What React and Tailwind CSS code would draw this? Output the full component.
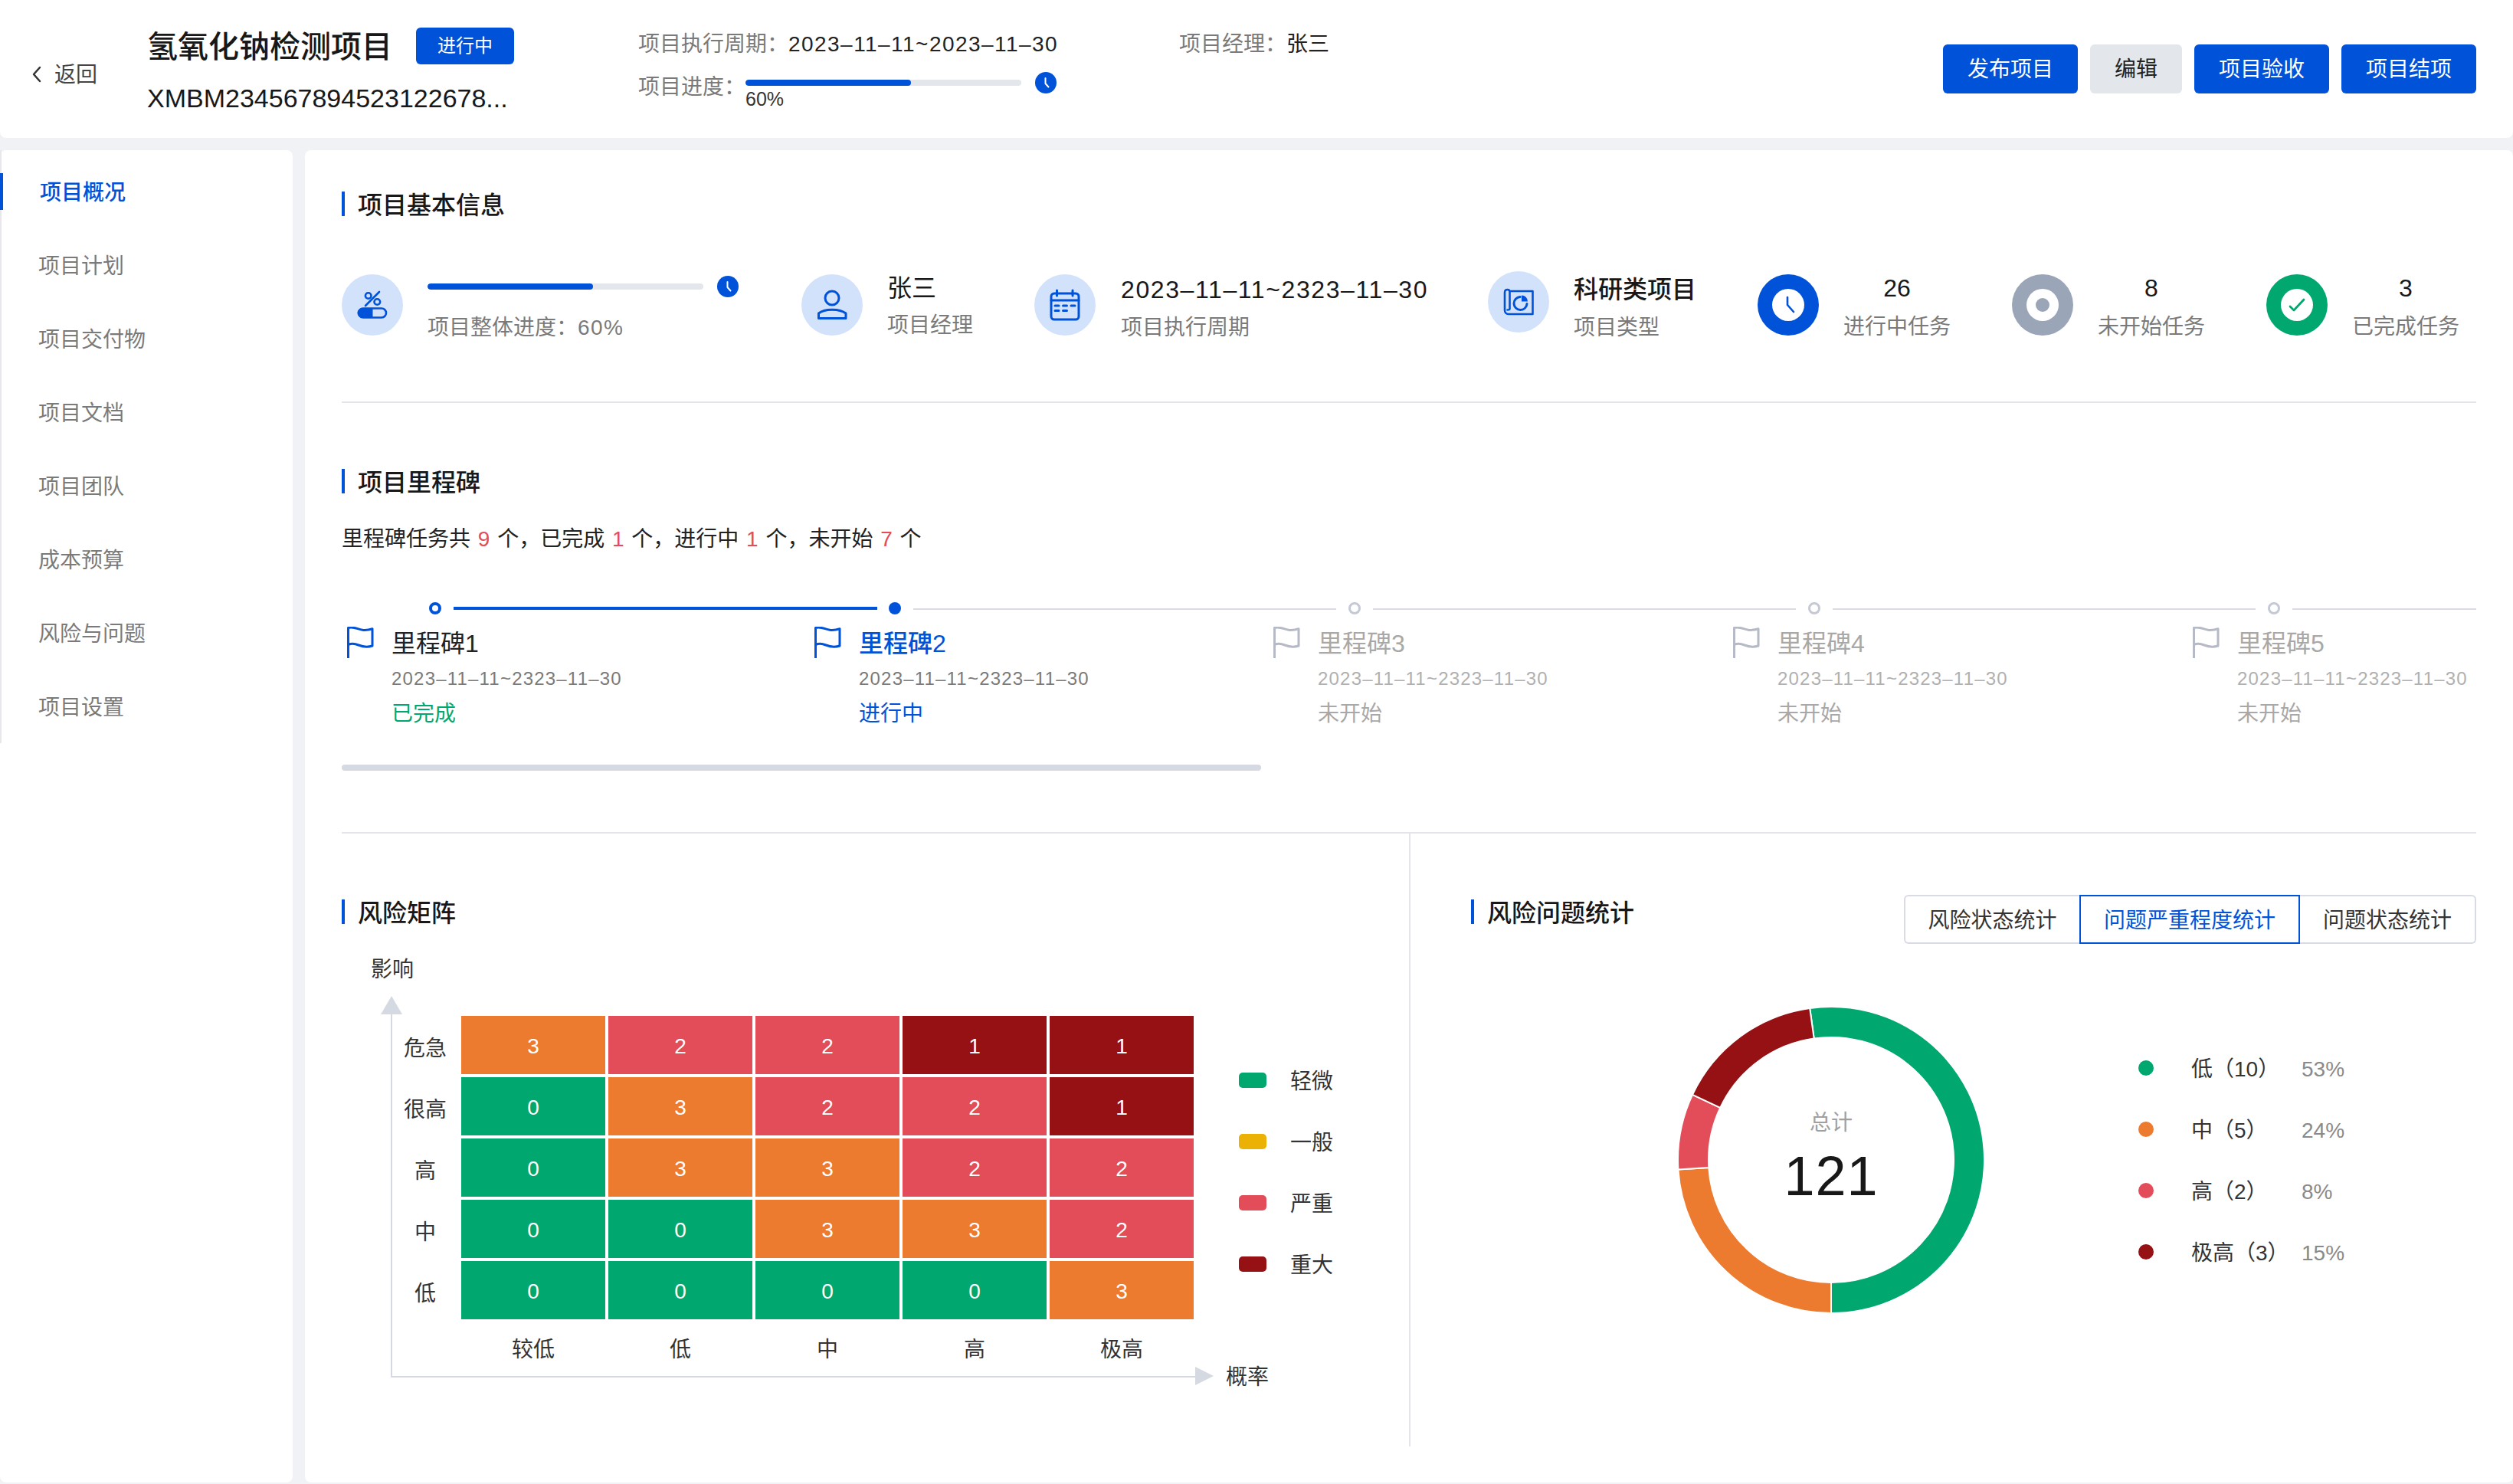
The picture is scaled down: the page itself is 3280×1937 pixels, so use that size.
import React from "react";

const BLUE = "#0052d9";
const G = "bg-[#00a870]", O = "bg-[#ed7b2f]", R = "bg-[#e34d59]", D = "bg-[#951114]";

function SectionTitle({ children, className = "" }) {
  return (
    <div className={"flex items-start h-[32px] " + className}>
      <div className="w-[4px] h-[32px] bg-[#0052d9] mr-[17px]" />
      <div className="text-[32px] leading-[32px] pt-[2px] font-medium text-[#181818]">{children}</div>
    </div>
  );
}

function SmallClock() {
  return (
    <div className="w-[28px] h-[28px] rounded-full bg-[#0052d9] shrink-0 flex items-center justify-center">
      <svg width="28" height="28" viewBox="0 0 28 28" fill="none">
        <path d="M13.5 8v7l4 4.5" stroke="#fff" strokeWidth="2" strokeLinecap="round" strokeLinejoin="round" />
      </svg>
    </div>
  );
}

function Bar() {
  return (
    <div className="w-[360px] h-[8px] rounded-full bg-[#e3e6eb] overflow-hidden">
      <div className="h-full bg-[#0052d9] rounded-full" style={{ width: "60%" }} />
    </div>
  );
}

function Circle({ children, className = "" }) {
  return (
    <div className={"w-[80px] h-[80px] rounded-full bg-[#d3e2fb] shrink-0 " + className}>
      <svg width="80" height="80" viewBox="0 0 80 80" fill="none" stroke={BLUE} strokeWidth="3" strokeLinecap="round" strokeLinejoin="round">
        {children}
      </svg>
    </div>
  );
}

function Status({ bg, children, dot }) {
  return (
    <div className={"w-[80px] h-[80px] rounded-full shrink-0 mt-[4px] flex items-center justify-center " + bg}>
      <div className="w-[42px] h-[42px] rounded-full bg-white flex items-center justify-center">
        {dot ? <div className="w-[18px] h-[18px] rounded-full bg-[#9aa5b8]" /> : children}
      </div>
    </div>
  );
}

function Info({ name, sub, className = "", nameCls = "mt-[4px]", subCls = "mt-[10px]" }) {
  return (
    <div className={className}>
      <div className={"text-[32px] leading-[40px] tracking-[1.6px] text-[#181818] whitespace-nowrap " + nameCls}>{name}</div>
      <div className={"text-[28px] leading-[40px] text-[#7a7a7a] whitespace-nowrap " + subCls}>{sub}</div>
    </div>
  );
}

function Stat({ w, bg, dot, icon, num, label }) {
  return (
    <div className={"flex shrink-0 " + w}>
      <Status bg={bg} dot={dot}>{icon}</Status>
      <div className="ml-[32px] w-[140px] text-center">
        <div className="text-[32px] leading-[40px] mt-[2px] text-[#181818]">{num}</div>
        <div className="text-[28px] leading-[40px] mt-[11px] text-[#7a7a7a] whitespace-nowrap">{label}</div>
      </div>
    </div>
  );
}

function Flag({ color }) {
  return (
    <svg width="36" height="42" viewBox="0 0 36 42" fill="none" className="mt-[2px] shrink-0" stroke={color} strokeWidth="3" strokeLinejoin="round">
      <path d="M1.5 41V1.5C9 -0.5 14 3.5 20 4.2C25 4.8 29 4 33 2.8V25C27 27 21 26.5 15 24C9.5 21.8 5.5 21.8 1.5 23.5" />
    </svg>
  );
}

function Milestone({ w, title, status, titleCls, statusCls, flag, dateCls }) {
  return (
    <div className={"flex shrink-0 pl-[7px] " + w}>
      <Flag color={flag} />
      <div className="ml-[22px] mt-[2px]">
        <div className={"text-[32px] leading-[44px] whitespace-nowrap " + titleCls}>{title}</div>
        <div className={"text-[24px] leading-[36px] mt-[6px] tracking-[1.2px] whitespace-nowrap " + dateCls}>2023–11–11~2323–11–30</div>
        <div className={"text-[28px] leading-[40px] mt-[8px] whitespace-nowrap " + statusCls}>{status}</div>
      </div>
    </div>
  );
}

const RING_BLUE = "w-[16px] h-[16px] rounded-full border-[4px] border-[#0052d9] bg-white shrink-0";
const RING_GRAY = "w-[16px] h-[16px] rounded-full border-[3px] border-[#c4c9d4] bg-white shrink-0";
const LINE_GRAY = "h-[2px] bg-[#d8dbe4] mx-[16px]";

const matrix = [
  [[O, 3], [R, 2], [R, 2], [D, 1], [D, 1]],
  [[G, 0], [O, 3], [R, 2], [R, 2], [D, 1]],
  [[G, 0], [O, 3], [O, 3], [R, 2], [R, 2]],
  [[G, 0], [G, 0], [O, 3], [O, 3], [R, 2]],
  [[G, 0], [G, 0], [G, 0], [G, 0], [O, 3]],
];

function polar(r, deg) {
  const a = ((deg - 90) * Math.PI) / 180;
  return [200 + r * Math.cos(a), 200 + r * Math.sin(a)];
}
function arc(start, end) {
  const [x1, y1] = polar(200, start);
  const [x2, y2] = polar(200, end);
  const [x3, y3] = polar(160, end);
  const [x4, y4] = polar(160, start);
  const large = end - start > 180 ? 1 : 0;
  return `M${x1} ${y1}A200 200 0 ${large} 1 ${x2} ${y2}L${x3} ${y3}A160 160 0 ${large} 0 ${x4} ${y4}Z`;
}

const segs = [
  ["#00a870", -8, 180],
  ["#ed7b2f", 180, 266.4],
  ["#e34d59", 266.4, 295.2],
  ["#951114", 295.2, 352],
];

const legendRows = [
  ["bg-[#00a870]", "低（10）", "53%"],
  ["bg-[#ed7b2f]", "中（5）", "24%"],
  ["bg-[#e34d59]", "高（2）", "8%"],
  ["bg-[#951114]", "极高（3）", "15%"],
];

const TAB_TEXT = "leading-[36px] pt-[4px]";

export default function App() {
  return (
    <div className="w-[3280px] h-[1937px] bg-[#f0f2f5] flex flex-col overflow-hidden text-[#181818] [font-family:'Liberation_Sans','Noto_Sans_CJK_SC',sans-serif]">
      {/* header */}
      <header className="h-[180px] shrink-0 bg-white rounded-b-[8px] flex items-start">
        <div className="w-[192px] shrink-0 pl-[41px] pt-[76px] flex items-center">
          <svg width="14" height="40" viewBox="0 0 14 40" fill="none">
            <path d="M11 11L3 20L11 29" stroke="#333" strokeWidth="2.5" strokeLinecap="round" strokeLinejoin="round" />
          </svg>
          <span className="ml-[16px] text-[28px] leading-[40px] pt-[2px] text-[#444]">返回</span>
        </div>
        <div className="w-[641px] shrink-0 pt-[34px]">
          <div className="flex items-center h-[52px]">
            <div className="text-[40px] leading-[52px] pt-[2px] font-medium text-[#181818]">氢氧化钠检测项目</div>
            <div className="ml-[31px] w-[128px] h-[48px] rounded-[6px] bg-[#0052d9] text-white text-[24px] flex items-center justify-center">进行中</div>
          </div>
          <div className="mt-[19px] text-[34px] leading-[46px] text-[#181818] whitespace-nowrap">XMBM234567894523122678...</div>
        </div>
        <div className="w-[706px] shrink-0 pt-[38px]">
          <div className="text-[28px] leading-[40px] whitespace-nowrap">
            <span className="text-[#7a7a7a]">项目执行周期：</span>
            <span className="tracking-[1.45px] text-[#222]">2023–11–11~2023–11–30</span>
          </div>
          <div className="flex mt-[16px]">
            <div className="w-[140px] text-[28px] leading-[40px] text-[#7a7a7a] shrink-0">项目进度：</div>
            <div>
              <div className="flex items-center gap-[18px] h-[28px]">
                <Bar />
                <SmallClock />
              </div>
              <div className="text-[25px] leading-[32px] -mt-[9px] text-[#333]">60%</div>
            </div>
          </div>
        </div>
        <div className="pt-[38px] text-[28px] leading-[40px] whitespace-nowrap">
          <span className="text-[#7a7a7a]">项目经理：</span>
          <span className="text-[#222]">张三</span>
        </div>
        <div className="ml-auto mr-[48px] mt-[58px] flex gap-[16px]">
          {["发布项目", "编辑", "项目验收", "项目结项"].map((t) => (
            <div
              key={t}
              className={
                "h-[64px] px-[32px] pt-[2px] rounded-[6px] text-[28px] flex items-center justify-center " +
                (t === "编辑" ? "bg-[#e3e6eb] text-[#222]" : "bg-[#0052d9] text-white")
              }
            >
              {t}
            </div>
          ))}
        </div>
      </header>

      <div className="mt-[16px] flex gap-[16px] h-[1739px]">
        {/* sidebar */}
        <aside className="w-[382px] shrink-0 bg-white rounded-[8px]">
          <nav className="border-l-[2px] border-[#e7e7ec] pt-[30px] pb-[24px] flex flex-col gap-[48px] text-[28px]">
            {["项目概况", "项目计划", "项目交付物", "项目文档", "项目团队", "成本预算", "风险与问题", "项目设置"].map((t, i) => (
              <div
                key={t}
                className={
                  "h-[48px] leading-[44px] pt-[4px] " +
                  (i === 0
                    ? "-ml-[2px] border-l-[4px] border-[#0052d9] pl-[48px] text-[#0052d9] font-medium"
                    : "pl-[48px] text-[#7a7a7a]")
                }
              >
                {t}
              </div>
            ))}
          </nav>
        </aside>

        {/* main */}
        <main className="w-[2882px] shrink-0 bg-white rounded-[8px] px-[48px] pt-[54px]">
          <SectionTitle>项目基本信息</SectionTitle>

          <div className="flex h-[84px] mt-[72px] items-start">
            <div className="flex w-[600px] shrink-0 mt-[4px]">
              <Circle>
                <circle cx="34.7" cy="28" r="3.8" strokeWidth="2.6" />
                <circle cx="46.3" cy="36" r="3.8" strokeWidth="2.6" />
                <path d="M49 23L31 41" strokeWidth="2.6" />
                <rect x="22" y="44.5" width="36" height="12" rx="6" strokeWidth="2.6" />
                <path d="M27 44.5H40V56.5H27A6 6 0 0 1 27 44.5Z" fill={BLUE} strokeWidth="1" />
              </Circle>
              <div className="ml-[32px]">
                <div className="flex items-center gap-[18px] h-[28px] mt-[2px]">
                  <Bar />
                  <SmallClock />
                </div>
                <div className="text-[28px] leading-[40px] mt-[20px] text-[#7a7a7a]">项目整体进度：<span className="tracking-[1.4px]">60%</span></div>
              </div>
            </div>

            <div className="flex w-[304px] shrink-0 mt-[4px]">
              <Circle>
                <circle cx="40" cy="31" r="9" />
                <path d="M22.5 57.5V51C30 44.5 50 44.5 58 51V57.5Z" />
              </Circle>
              <Info className="ml-[32px]" name="张三" sub="项目经理" nameCls="-mt-[2px] tracking-normal" subCls="mt-[9px]" />
            </div>

            <div className="flex w-[592px] shrink-0 mt-[4px]">
              <Circle>
                <rect x="22" y="25" width="36" height="34" rx="4" />
                <path d="M29.5 21V28M50 21V28M22 34H58" />
                <path d="M27 41H32M37.5 41H42.5M48 41H53M27 47.5H32M37.5 47.5H42.5" strokeWidth="3" />
              </Circle>
              <Info className="ml-[33px]" name="2023–11–11~2323–11–30" sub="项目执行周期" nameCls="mt-0" />
            </div>

            <div className="flex w-[352px] shrink-0">
              <Circle>
                <path d="M28.5 26H58.5V56H27C23.5 56 22 53.5 22 51V28C22 25 24 24 25.5 24C27.5 24 28.5 25 28.5 27V49C28.5 50.5 27 50.5 25.5 50.5" strokeWidth="2.6" />
                <path d="M42 33.5A8.5 8.5 0 1 0 51 42.5" strokeWidth="3" />
                <path d="M44 31.5A8 8 0 0 1 52 39.5H44Z" fill={BLUE} stroke="none" />
              </Circle>
              <Info className="ml-[32px]" name={<span className="font-medium tracking-normal">科研类项目</span>} sub="项目类型" />
            </div>

            <Stat
              w="w-[332px]"
              bg="bg-[#0052d9]"
              num="26"
              label="进行中任务"
              icon={
                <svg width="42" height="42" viewBox="0 0 42 42" fill="none">
                  <path d="M20 11V21L28 30" stroke={BLUE} strokeWidth="2.6" strokeLinecap="round" strokeLinejoin="round" />
                </svg>
              }
            />
            <Stat w="w-[332px]" bg="bg-[#9aa5b8]" dot num="8" label="未开始任务" />
            <Stat
              w="w-[274px]"
              bg="bg-[#00a870]"
              num="3"
              label="已完成任务"
              icon={
                <svg width="42" height="42" viewBox="0 0 42 42" fill="none">
                  <path d="M12 23L17 28L30 14" stroke="#00a870" strokeWidth="2.8" strokeLinecap="round" strokeLinejoin="round" />
                </svg>
              }
            />
          </div>

          <div className="h-[2px] bg-[#e3e5ea] mt-[86px]" />

          <SectionTitle className="mt-[86px]">项目里程碑</SectionTitle>

          <div className="mt-[40px] text-[28px] leading-[40px] text-[#222] whitespace-pre">
            里程碑任务共 <span className="mx-[2px] text-[#e34d59]">9</span> 个，已完成 <span className="mx-[2px] text-[#e34d59]">1</span> 个，进行中 <span className="mx-[2px] text-[#e34d59]">1</span> 个，未开始 <span className="mx-[2px] text-[#e34d59]">7</span> 个
          </div>

          {/* steps */}
          <div className="mt-[62px] flex items-center h-[16px]">
            <div className="w-[114px] shrink-0" />
            <div className={RING_BLUE} />
            <div className="w-[553px] h-[4px] bg-[#0052d9] ml-[16px] mr-[15px] shrink-0" />
            <div className="w-[16px] h-[16px] rounded-full bg-[#0052d9] shrink-0" />
            <div className={LINE_GRAY + " w-[552px] shrink-0 mt-[2px]"} />
            <div className={RING_GRAY} />
            <div className={LINE_GRAY + " w-[552px] shrink-0 mt-[2px]"} />
            <div className={RING_GRAY} />
            <div className={LINE_GRAY + " w-[552px] shrink-0 mt-[2px]"} />
            <div className={RING_GRAY} />
            <div className="h-[2px] bg-[#d8dbe4] ml-[16px] flex-1 mt-[2px]" />
          </div>

          <div className="flex mt-[14px]">
            <Milestone w="w-[610px]" flag={BLUE} title="里程碑1" status="已完成" titleCls="text-[#222]" dateCls="text-[#7a7a7a]" statusCls="text-[#00a870]" />
            <Milestone w="w-[599px]" flag={BLUE} title="里程碑2" status="进行中" titleCls="text-[#0052d9] font-medium" dateCls="text-[#7a7a7a]" statusCls="text-[#0052d9]" />
            <Milestone w="w-[600px]" flag="#b5bac6" title="里程碑3" status="未开始" titleCls="text-[#a8a8a8]" dateCls="text-[#b0b0b0]" statusCls="text-[#a8a8a8]" />
            <Milestone w="w-[600px]" flag="#b5bac6" title="里程碑4" status="未开始" titleCls="text-[#a8a8a8]" dateCls="text-[#b0b0b0]" statusCls="text-[#a8a8a8]" />
            <Milestone w="w-[371px]" flag="#b5bac6" title="里程碑5" status="未开始" titleCls="text-[#a8a8a8]" dateCls="text-[#b0b0b0]" statusCls="text-[#a8a8a8]" />
          </div>

          <div className="mt-[46px] w-[1200px] h-[8px] rounded-full bg-[#d5d9e2]" />
          <div className="h-[2px] bg-[#e3e5ea] mt-[80px]" />

          {/* bottom */}
          <div className="flex h-[800px]">
            <div className="w-[1395px] shrink-0 border-r-[2px] border-[#e3e5ea] pt-[86px]">
              <SectionTitle>风险矩阵</SectionTitle>
              <div className="ml-[38px] mt-[38px] text-[28px] leading-[36px] pt-[4px] text-[#333]">影响</div>
              <div className="flex mt-[40px] ml-[64px]">
                <div className="relative w-[1050px] h-[474px] shrink-0 border-l-[2px] border-b-[2px] border-[#d5d9e2] pt-[2px]">
                  <svg className="absolute -left-[15px] -top-[24px]" width="28" height="24" viewBox="0 0 28 24">
                    <path d="M14 0L28 24H0Z" fill="#d5d9e2" />
                  </svg>
                  <svg className="absolute -right-[24px] -bottom-[12px]" width="24" height="24" viewBox="0 0 24 24">
                    <path d="M24 12L0 0V24Z" fill="#d5d9e2" />
                  </svg>
                  <div className="flex">
                    <div className="w-[90px] shrink-0 flex flex-col gap-[4px] pr-[4px]">
                      {["危急", "很高", "高", "中", "低"].map((t) => (
                        <div key={t} className="h-[76px] pt-[10px] flex items-center justify-center text-[28px] text-[#333]">{t}</div>
                      ))}
                    </div>
                    <div className="grid grid-cols-5 gap-[4px] w-[956px]">
                      {matrix.flat().map(([c, n], i) => (
                        <div key={i} className={"h-[76px] pt-[3px] flex items-center justify-center text-white text-[28px] " + c}>{n}</div>
                      ))}
                    </div>
                  </div>
                  <div className="grid grid-cols-5 gap-[4px] w-[956px] ml-[90px] mt-[20px]">
                    {["较低", "低", "中", "高", "极高"].map((t) => (
                      <div key={t} className="text-center text-[28px] leading-[40px] text-[#333]">{t}</div>
                    ))}
                  </div>
                </div>
                <div className="flex-1 flex flex-col justify-between pl-[40px]">
                  <div className="ml-[17px] mt-[66px] flex flex-col gap-[40px]">
                    {[["bg-[#00a870]", "轻微"], ["bg-[#ebb105]", "一般"], ["bg-[#e34d59]", "严重"], ["bg-[#951114]", "重大"]].map(([c, t]) => (
                      <div key={t} className="flex items-center h-[40px]">
                        <div className={"w-[36px] h-[20px] rounded-[5px] " + c} />
                        <div className={"ml-[31px] text-[28px] text-[#333] " + TAB_TEXT}>{t}</div>
                      </div>
                    ))}
                  </div>
                  <div className="text-[28px] leading-[40px] -mb-[20px] text-[#333]">概率</div>
                </div>
              </div>
            </div>

            <div className="flex-1 pl-[79px] pt-[80px]">
              <div className="flex justify-between items-start">
                <SectionTitle className="mt-[6px]">风险问题统计</SectionTitle>
                <div className="flex h-[64px] text-[28px]">
                  <div className="w-[229px] border-[2px] border-r-0 border-[#d8dbe4] rounded-l-[6px] pt-[4px] flex items-center justify-center text-[#333]">风险状态统计</div>
                  <div className="w-[288px] border-[2px] border-[#0052d9] pt-[4px] flex items-center justify-center text-[#0052d9]">问题严重程度统计</div>
                  <div className="w-[230px] border-[2px] border-l-0 border-[#d8dbe4] rounded-r-[6px] pt-[4px] flex items-center justify-center text-[#333]">问题状态统计</div>
                </div>
              </div>

              <div className="flex mt-[82px] ml-[270px]">
                <div className="relative w-[400px] h-[400px] shrink-0">
                  <svg width="400" height="400" viewBox="0 0 400 400">
                    {segs.map(([c, a, b]) => (
                      <path key={c} d={arc(a, b)} fill={c} stroke="#fff" strokeWidth="2" />
                    ))}
                  </svg>
                  <div className="absolute inset-0 flex flex-col items-center">
                    <div className="mt-[132px] text-[28px] leading-[40px] text-[#a0a0a0]">总计</div>
                    <div className="mt-[4px] text-[72px] leading-[90px] tracking-[1px] text-[#181818]">121</div>
                  </div>
                </div>
                <div className="ml-[201px] mt-[60px] flex flex-col gap-[40px]">
                  {legendRows.map(([c, n, p]) => (
                    <div key={n} className="flex items-center h-[40px] text-[28px]">
                      <div className={"w-[20px] h-[20px] rounded-full shrink-0 " + c} />
                      <div className={"w-[144px] ml-[49px] whitespace-nowrap text-[#333] " + TAB_TEXT}>{n}</div>
                      <div className={"text-[#8a8a8a] whitespace-nowrap " + TAB_TEXT}>{p}</div>
                    </div>
                  ))}
                </div>
              </div>
            </div>
          </div>
        </main>
      </div>
    </div>
  );
}
